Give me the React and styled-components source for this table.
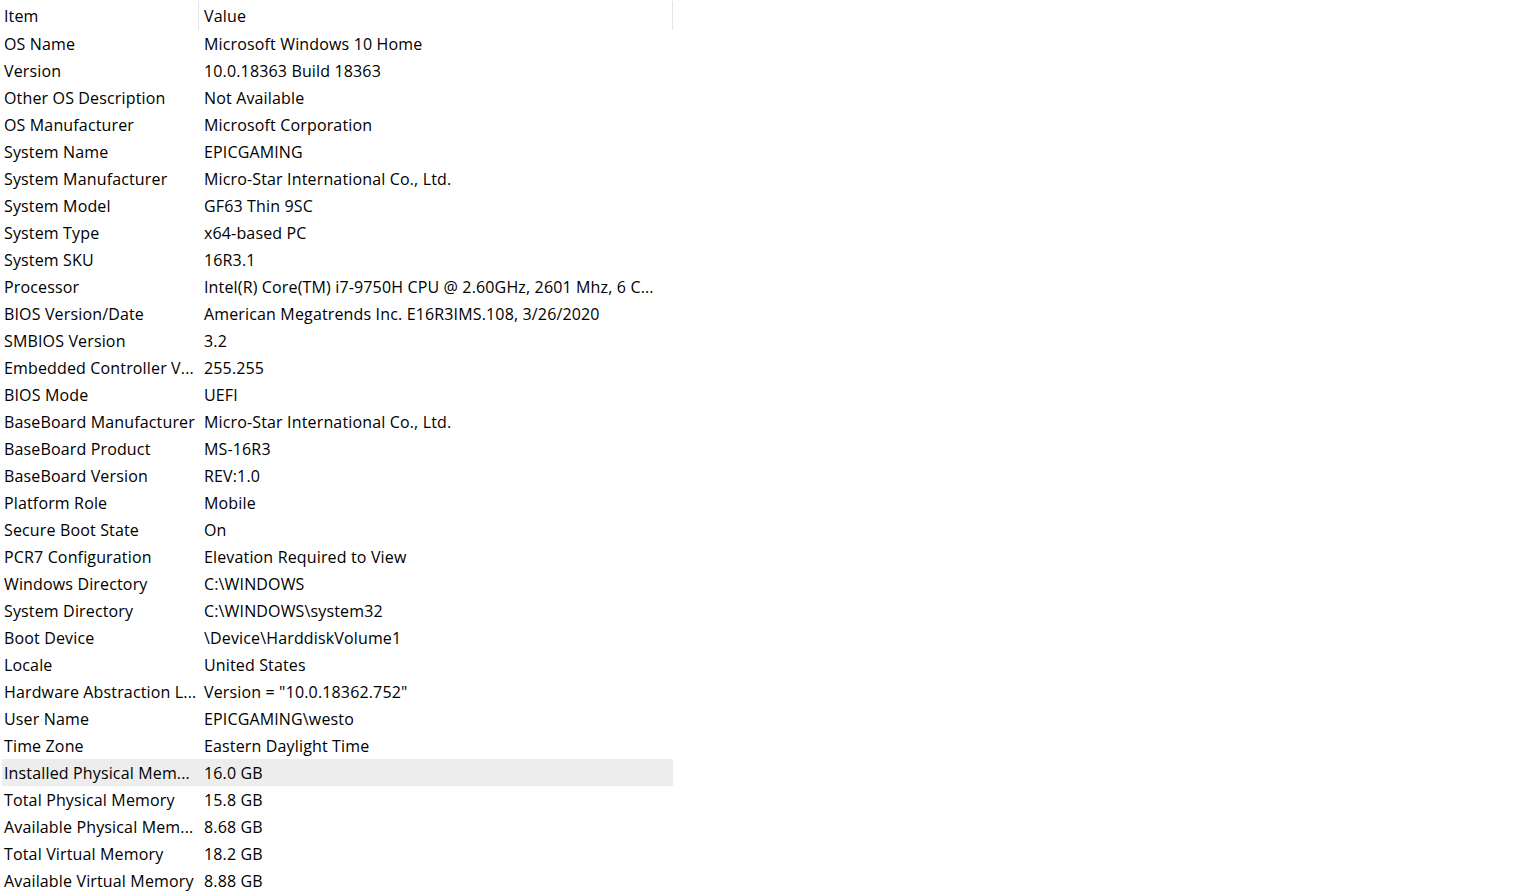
import React from "react";
import styled, { createGlobalStyle } from "styled-components";

const GlobalStyle = createGlobalStyle`
    html, body {
        margin: 0;
        padding: 0;
        background: #ffffff;
    }
    body {
        font-family: "Open Sans", "Noto Sans", "Liberation Sans", sans-serif;
        font-size: 16px;
        letter-spacing: 0.15px;
        color: #000000;
    }
`;

const List = styled.div`
    display: flex;
    flex-direction: column;
    width: 671px;
    padding-left: 2px;
`;

const Header = styled.div`
    display: grid;
    grid-template-columns: 196px 1fr;
    height: 30px;
    align-items: center;
`;

const HeaderCell = styled.div`
    position: relative;
    height: 100%;
    display: flex;
    align-items: center;
    padding-left: ${(p) => p.$pad}px;
    padding-top: 1px;
    box-sizing: border-box;
    &::after {
        content: "";
        position: absolute;
        right: ${(p) => p.$sepRight}px;
        top: 1px;
        height: 29px;
        width: 1px;
        background: #e5e5e5;
    }
`;

const Row = styled.div`
    display: grid;
    grid-template-columns: 196px 1fr;
    height: 27px;
    background: ${(p) => (p.$selected ? "#ededed" : "transparent")};
`;

const Cell = styled.div`
    padding-left: ${(p) => p.$pad}px;
    padding-top: 1px;
    white-space: nowrap;
    overflow: hidden;
    line-height: 27px;
`;

const rows = [
    ["OS Name", "Microsoft Windows 10 Home"],
    ["Version", "10.0.18363 Build 18363"],
    ["Other OS Description", "Not Available"],
    ["OS Manufacturer", "Microsoft Corporation"],
    ["System Name", "EPICGAMING"],
    ["System Manufacturer", "Micro-Star International Co., Ltd."],
    ["System Model", "GF63 Thin 9SC"],
    ["System Type", "x64-based PC"],
    ["System SKU", "16R3.1"],
    ["Processor", "Intel(R) Core(TM) i7-9750H CPU @ 2.60GHz, 2601 Mhz, 6 C..."],
    ["BIOS Version/Date", "American Megatrends Inc. E16R3IMS.108, 3/26/2020"],
    ["SMBIOS Version", "3.2"],
    ["Embedded Controller V...", "255.255"],
    ["BIOS Mode", "UEFI"],
    ["BaseBoard Manufacturer", "Micro-Star International Co., Ltd."],
    ["BaseBoard Product", "MS-16R3"],
    ["BaseBoard Version", "REV:1.0"],
    ["Platform Role", "Mobile"],
    ["Secure Boot State", "On"],
    ["PCR7 Configuration", "Elevation Required to View"],
    ["Windows Directory", "C:\\WINDOWS"],
    ["System Directory", "C:\\WINDOWS\\system32"],
    ["Boot Device", "\\Device\\HarddiskVolume1"],
    ["Locale", "United States"],
    ["Hardware Abstraction L...", "Version = \"10.0.18362.752\""],
    ["User Name", "EPICGAMING\\westo"],
    ["Time Zone", "Eastern Daylight Time"],
    ["Installed Physical Mem...", "16.0 GB"],
    ["Total Physical Memory", "15.8 GB"],
    ["Available Physical Mem...", "8.68 GB"],
    ["Total Virtual Memory", "18.2 GB"],
    ["Available Virtual Memory", "8.88 GB"],
];

const App = () => {
    return (
        <React.Fragment>
            <GlobalStyle />
            <List>
                <Header>
                    <HeaderCell $pad={2} $sepRight={-1}>Item</HeaderCell>
                    <HeaderCell $pad={6} $sepRight={0}>Value</HeaderCell>
                </Header>
                {rows.map(([item, value], idx) => (
                    <Row key={idx} $selected={idx === 27}>
                        <Cell $pad={2}>{item}</Cell>
                        <Cell $pad={6}>{value}</Cell>
                    </Row>
                ))}
            </List>
        </React.Fragment>
    );
};

export default App;
